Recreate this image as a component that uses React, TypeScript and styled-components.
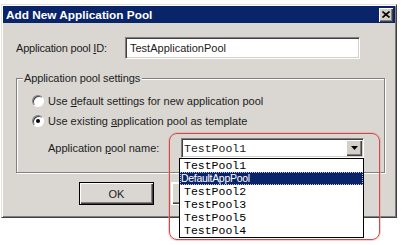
import styled, { createGlobalStyle } from 'styled-components'

const GlobalStyle = createGlobalStyle`
  body {
    margin: 0;
    background: #fff;
    font-family: 'Liberation Sans', Arial, sans-serif;
  }
`

const pools = [
  { name: 'TestPool1' },
  { name: 'DefaultAppPool', active: true },
  { name: 'TestPool2' },
  { name: 'TestPool3' },
  { name: 'TestPool5' },
  { name: 'TestPool4' },
]

const App = () => {
  return (
    <>
      <GlobalStyle />
      <Stage>
        <Window>
          <TitleBar>
            <Title>Add New Application Pool</Title>
            <CloseButton>
              <svg width='8' height='7' viewBox='0 0 8 7'>
                <path d='M0.5 0.5 L7.5 6.5 M7.5 0.5 L0.5 6.5' stroke='#000' strokeWidth='1.6' />
              </svg>
            </CloseButton>
          </TitleBar>
          <Body>
            <IdRow>
              <IdLabel>
                Application pool <Key>I</Key>D:
              </IdLabel>
              <TextBox>TestApplicationPool</TextBox>
            </IdRow>
            <Group>
              <Legend>Application pool settings</Legend>
              <RadioRow>
                <Radio />
                <span>
                  Use <Key>d</Key>efault settings for new application pool
                </span>
              </RadioRow>
              <RadioRow>
                <Radio $checked />
                <span>
                  Use existing <Key>a</Key>pplication pool as template
                </span>
              </RadioRow>
              <NameRow>
                <NameLabel>
                  Application <Key>p</Key>ool name:
                </NameLabel>
                <Combo>
                  <ComboValue>TestPool1</ComboValue>
                  <ArrowButton>
                    <svg width='7' height='4' viewBox='0 0 7 4'>
                      <polygon points='0,0 7,0 3.5,4' fill='#000' />
                    </svg>
                  </ArrowButton>
                  <DropList>
                    {pools.map((pool) => (
                      <PoolItem key={pool.name} $active={pool.active}>
                        {pool.name}
                      </PoolItem>
                    ))}
                  </DropList>
                  <Ring />
                </Combo>
              </NameRow>
            </Group>
            <ButtonRow>
              <PushButton $default>OK</PushButton>
              <PushButton>Cancel</PushButton>
            </ButtonRow>
          </Body>
        </Window>
      </Stage>
    </>
  )
}

export default App

const Stage = styled.div`
  box-sizing: border-box;
  height: 245px;
  padding: 4px 0 0 1px;
`

const Window = styled.div`
  box-sizing: border-box;
  width: 396px;
  background: #dad7d2;
  border: 1px solid;
  border-color: #e4e1dc #404040 #404040 #e4e1dc;
  box-shadow: inset 1px 1px #fff, inset -1px -1px #808080;
  padding: 1px;
  font-size: 11px;
  color: #1c1c1c;
`

const TitleBar = styled.div`
  display: flex;
  align-items: center;
  justify-content: space-between;
  height: 17px;
  padding: 0 2px 0 3px;
  background: #0a246a;
`

const Title = styled.div`
  color: #fff;
  font-weight: bold;
  font-size: 11.8px;
`

const CloseButton = styled.div`
  box-sizing: border-box;
  display: flex;
  align-items: center;
  justify-content: center;
  width: 14px;
  height: 14px;
  background: #d4d0c8;
  box-shadow: inset 1px 1px #fff, inset -1px -1px #404040, inset -2px -2px #808080;
`

const Body = styled.div`
  padding: 14px 10px 11px 13px;
`

const IdRow = styled.div`
  display: flex;
  align-items: center;
`

const IdLabel = styled.div`
  width: 109px;
  letter-spacing: -0.2px;
`

const Key = styled.span`
  text-decoration: underline;
`

const TextBox = styled.div`
  box-sizing: border-box;
  display: flex;
  align-items: center;
  width: 235px;
  height: 22px;
  padding-left: 4px;
  background: #fff;
  border: 1px solid;
  border-color: #808080 #fff #fff #808080;
  box-shadow: inset 1px 1px #404040, inset -1px -1px #d4d0c8;
`

const Group = styled.fieldset`
  margin: 13px 0 0;
  padding: 7px 10px 14px 6px;
  border: 1px solid #808080;
  box-shadow: inset 1px 1px #fff, 1px 1px #fff;
  display: flex;
  flex-direction: column;
  gap: 2px;
`

const Legend = styled.legend`
  padding: 0 2px 0 1px;
  line-height: 13px;
  background: #dad7d2;
  letter-spacing: -0.1px;
`

const RadioRow = styled.label`
  display: flex;
  align-items: center;
  gap: 4px;
  height: 18px;
  padding-left: 9px;
`

const Radio = styled.span<{ $checked?: boolean }>`
  box-sizing: border-box;
  position: relative;
  width: 12px;
  height: 12px;
  border-radius: 50%;
  background: #fff;
  border: 1px solid;
  border-color: #808080 #fff #fff #808080;
  box-shadow: inset 1px 1px #404040;
  &::after {
    content: '';
    display: ${(p) => (p.$checked ? 'block' : 'none')};
    position: absolute;
    left: 3px;
    top: 3px;
    width: 4px;
    height: 4px;
    border-radius: 50%;
    background: #000;
  }
`

const NameRow = styled.div`
  display: flex;
  align-items: center;
  margin-top: 6px;
  padding-left: 25px;
`

const NameLabel = styled.div`
  width: 133px;
`

const Combo = styled.div`
  box-sizing: border-box;
  position: relative;
  display: flex;
  align-items: center;
  justify-content: space-between;
  width: 183px;
  height: 20px;
  padding: 0 0 0 2px;
  background: #fff;
  border: 1px solid;
  border-color: #808080 #fff #fff #808080;
  box-shadow: inset 1px 1px #404040, inset -1px -1px #d4d0c8;
`

const ComboValue = styled.div`
  font-family: 'Liberation Mono', 'Courier New', monospace;
  font-size: 11.5px;
`

const ArrowButton = styled.div`
  box-sizing: border-box;
  display: flex;
  align-items: center;
  justify-content: center;
  width: 16px;
  height: 16px;
  margin-right: 1px;
  background: #d4d0c8;
  box-shadow: inset 1px 1px #fff, inset -1px -1px #404040, inset -2px -2px #808080;
`

const DropList = styled.div`
  position: absolute;
  z-index: 2;
  left: -3px;
  top: 19px;
  box-sizing: border-box;
  width: 185px;
  border: 1px solid #000;
  background: #fff;
`

const PoolItem = styled.div<{ $active?: boolean }>`
  height: 13px;
  line-height: 13px;
  padding-left: ${(p) => (p.$active ? '1px' : '4px')};
  font-family: ${(p) =>
    p.$active ? "'Liberation Sans', Arial, sans-serif" : "'Liberation Mono', 'Courier New', monospace"};
  font-size: ${(p) => (p.$active ? '10.5px' : '11.5px')};
  letter-spacing: ${(p) => (p.$active ? '-0.3px' : '0')};
  color: ${(p) => (p.$active ? '#fff' : '#000')};
  background: ${(p) => (p.$active ? '#0a246a' : '#fff')};
  outline: ${(p) => (p.$active ? '1px dotted #c8c8c8' : 'none')};
  outline-offset: -1px;
`

const Ring = styled.div`
  position: absolute;
  z-index: 3;
  left: -13px;
  top: -6px;
  width: 209px;
  height: 105px;
  border: 1px solid #d04848;
  border-radius: 8px;
  box-shadow: 0 0 0 1px rgba(230, 150, 150, 0.45);
  pointer-events: none;
`

const ButtonRow = styled.div`
  display: flex;
  gap: 17px;
  margin-top: 9px;
  padding-left: 63px;
`

const PushButton = styled.div<{ $default?: boolean }>`
  box-sizing: border-box;
  display: flex;
  align-items: center;
  justify-content: center;
  width: 75px;
  height: 23px;
  background: #dad7d2;
  border: 1px solid ${(p) => (p.$default ? '#000' : '#fff')};
  box-shadow: inset 1px 1px #fff, inset -1px -1px #404040, inset -2px -2px #808080;
`
